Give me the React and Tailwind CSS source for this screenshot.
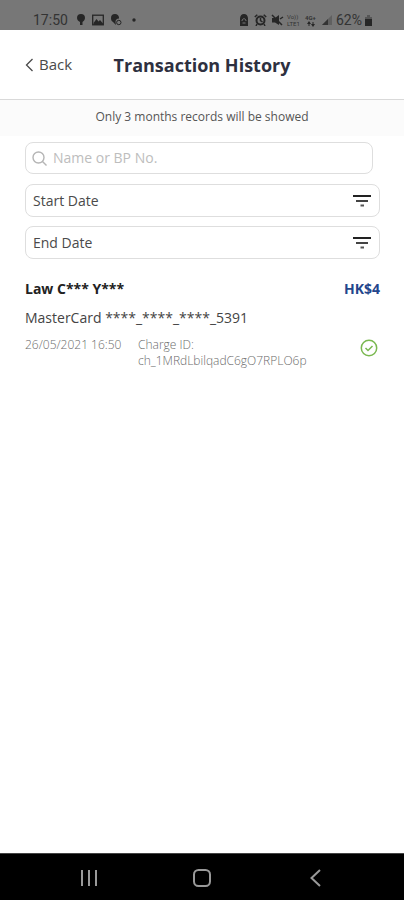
import React from 'react';

function StatusBar() {
  return (
    <div className="flex h-[30px] items-end justify-between bg-[#777777] pr-[31px] pl-[33px] font-['Roboto',sans-serif] text-sm text-[#333333]">
      <div className="flex h-5 items-center">
        <span className="w-[42px]">17:50</span>
        <svg className="h-3 w-4" viewBox="0 0 16 12" fill="#262626" aria-hidden="true">
          <path d="M6 0a4 4 0 0 1 4 4c0 2-1.500 3.200-2.500 4v3H5V8C3.500 7 2 6 2 4a4 4 0 0 1 4-4Z" />
        </svg>
        <svg className="h-3 w-[18px]" viewBox="0 0 18 12" aria-hidden="true">
          <rect x="1.700" y="1.200" width="10.600" height="9.600" fill="none" stroke="#262626" strokeWidth="1.300" />
          <path d="m2.500 9 3-4 2 2.500L9 6l3 3.500V11H2.500Z" fill="#262626" />
        </svg>
        <svg className="h-3 w-5" viewBox="0 0 20 12" fill="#262626" aria-hidden="true">
          <path d="M6 0a4 4 0 0 1 4 4.500 3.500 3.500 0 0 0-3.500 3.500L7 11 4 8C2.500 7 2 6 2 4a4 4 0 0 1 4-4Z" />
          <circle cx="9.800" cy="8.500" r="2.200" fill="none" stroke="#262626" />
        </svg>
        <svg className="h-3 w-3" viewBox="0 0 12 12" aria-hidden="true">
          <circle cx="5" cy="6" r="1.700" fill="#262626" />
        </svg>
      </div>
      <div className="flex h-5 items-center">
        <svg className="h-3 w-4" viewBox="0 0 16 12" aria-hidden="true">
          <path d="M2 4.500C2 2 3.500 0 6 0s4 2 4 4.500V12H2Z" fill="#262626" />
          <path d="M4 7c0-3 4-3 4 0M4.500 9h3" fill="none" stroke="#777777" />
        </svg>
        <svg className="h-3 w-[17px]" viewBox="0 0 17 12" fill="none" stroke="#262626" aria-hidden="true">
          <circle cx="6.500" cy="6.500" r="4" strokeWidth="2" />
          <path d="m.8 3 2.500-2.300m6.400 0L12.200 3M6.500 4v2.500l2 1.500M3 10l-1 2m8-2 1 2" strokeWidth="1.500" />
        </svg>
        <svg className="h-3 w-4" viewBox="0 0 16 12" aria-hidden="true">
          <path d="M1 4h3l4-3v10L4 8.500H1Z" fill="#262626" />
          <path d="m1 1 10 10M9 5l3-2" fill="none" stroke="#262626" strokeWidth="1.500" />
        </svg>
        <span className="flex w-[18px] flex-col text-[6px] leading-[7px]">
          <span>Vo))</span>
          <span>LTE1</span>
        </span>
        <span className="flex w-[15px] flex-col text-[6px] leading-[7px] font-bold">
          4G+
          <svg className="ml-0.5 h-1.5 w-2" viewBox="0 0 8 6" fill="#262626" aria-hidden="true">
            <path d="M0 3 2 0l2 3H2.500v2h-1V3ZM4 3l2 3 2-3H6.500V1h-1v2Z" />
          </svg>
        </span>
        <svg className="h-3 w-4" viewBox="0 0 16 12" aria-hidden="true">
          <path d="M12 1v10H2Z" fill="#606060" />
          <path d="M8 5v6H2Z" fill="#333333" />
        </svg>
        <span className="mr-0.5">62%</span>
        <svg className="h-3 w-[9px]" viewBox="0 0 9 12" aria-hidden="true">
          <path d="M1 3h2V1h3v2h2v9H1Z" fill="#555555" />
          <path d="M1 5h7v7H1Z" fill="#262626" />
        </svg>
      </div>
    </div>
  );
}

function DateField({ label }) {
  return (
    <button
      type="button"
      className="flex h-[33px] w-full items-center justify-between rounded-lg border border-[#dedede] pr-2 pl-[7px] text-sm text-[#4a4a4a]"
    >
      {label}
      <svg className="h-4 w-[18px]" viewBox="0 0 18 16" fill="none" strokeWidth="2" aria-hidden="true">
        <path d="M0 3h18" stroke="#222222" />
        <path d="M3 8h12" stroke="#444444" />
        <path d="M7.500 12.500h3.500" stroke="#555555" />
      </svg>
    </button>
  );
}

function Transaction() {
  return (
    <article className="mt-5 text-sm">
      <div className="flex h-5 items-center justify-between font-bold">
        <h2 className="text-[#222222]">Law C*** Y***</h2>
        <span className="text-[#24468c]">HK$4</span>
      </div>
      <p className="mt-[9px] h-5 leading-5 text-[#444444]">MasterCard ****_****_****_5391</p>
      <div className="mt-[9px] flex items-start text-xs leading-4 font-light text-[#6c6c6c]">
        <time className="w-[113px] shrink-0">26/05/2021 16:50</time>
        <p className="flex-1">
          Charge ID:
          <br />
          ch_1MRdLbilqadC6gO7RPLO6p
        </p>
        <svg className="mt-0.5 mr-0.5 h-[18px] w-[18px]" viewBox="0 0 18 18" fill="none" stroke="#7ab850" role="img" aria-label="Successful">
          <circle cx="9" cy="9" r="7.700" strokeWidth="1.500" />
          <path d="m5.500 9 2.500 2.500 4.500-4.500" strokeWidth="1.500" />
        </svg>
      </div>
    </article>
  );
}

function NavigationBar() {
  return (
    <nav className="flex h-[47px] items-center justify-center gap-[93px] border-t border-[#444444] bg-black pt-0.5" aria-label="System">
      <button type="button" aria-label="Recent apps">
        <svg className="h-5 w-5" viewBox="0 0 20 20" stroke="#999999" strokeWidth="2">
          <path d="M3 2v16M10 2v16M17 2v16" />
        </svg>
      </button>
      <button type="button" aria-label="Home">
        <svg className="h-5 w-5" viewBox="0 0 20 20" fill="none" stroke="#999999" strokeWidth="2">
          <rect x="2" y="2" width="16" height="16" rx="4.500" />
        </svg>
      </button>
      <button type="button" aria-label="Go back">
        <svg className="h-5 w-5" viewBox="0 0 20 20" fill="none" stroke="#999999" strokeWidth="2">
          <path d="m15 2-8.500 8 8.500 8" />
        </svg>
      </button>
    </nav>
  );
}

export default function App() {
  return (
    <div className="flex min-h-screen flex-col bg-white font-['Open_Sans',sans-serif]">
      <StatusBar />
      <header className="grid h-[70px] grid-cols-[1fr_auto_1fr] items-center border-b border-[#d9d9d9] px-[25px]">
        <button type="button" className="flex items-center gap-1.5 justify-self-start text-[15px] text-[#4a4a4a]">
          <svg className="h-3.5 w-2" viewBox="0 0 8 14" fill="none" stroke="#4a4a4a" strokeWidth="1.300" aria-hidden="true">
            <path d="M7.500 1 1.500 7l6 6" />
          </svg>
          Back
        </button>
        <h1 className="text-lg font-bold text-[#2e3040]">Transaction History</h1>
      </header>
      <p className="bg-[#fbfbfb] pt-[9px] pb-[11px] text-center text-xs leading-4 text-[#555555]">
        Only 3 months records will be showed
      </p>
      <main className="flex-1 px-6 pt-1.5 pl-[25px]">
        <label className="mr-[7px] flex h-8 items-center gap-1.5 rounded-lg border border-[#dedede] px-1.5">
          <svg className="h-[15px] w-[15px] shrink-0" viewBox="0 0 15 15" fill="none" stroke="#b5b5b5" strokeWidth="1.400" aria-hidden="true">
            <circle cx="6.500" cy="6.500" r="5.500" />
            <path d="m10.500 10.500 4 4" />
          </svg>
          <input
            type="text"
            aria-label="Name or BP No."
            placeholder="Name or BP No."
            className="min-w-0 flex-1 text-sm text-[#4a4a4a] outline-none placeholder:text-[#bdbdbd]"
          />
        </label>
        <div className="mt-2.5 flex flex-col gap-[9px]">
          <DateField label="Start Date" />
          <DateField label="End Date" />
        </div>
        <Transaction />
      </main>
      <NavigationBar />
    </div>
  );
}
